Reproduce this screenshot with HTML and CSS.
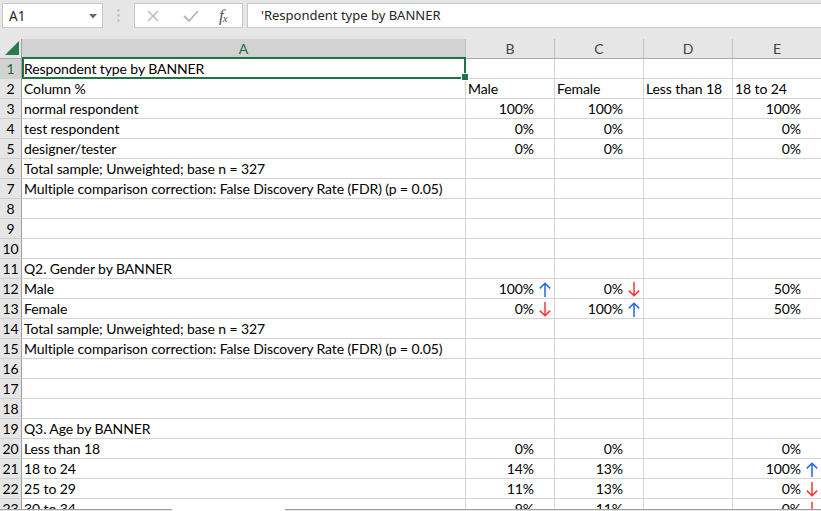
FILE: index.html
```html
<!DOCTYPE html>
<html>
<head>
<meta charset="utf-8">
<link rel="stylesheet" href="styles.css">
</head>
<body>
<div class="app">
  <div class="toolbar">
    <div class="namebox">
      <span class="ref">A1</span>
      <svg class="dd" width="8" height="5" viewBox="0 0 8 5"><path d="M0 0 H8 L4 4.5 Z" fill="#6a6a6a"/></svg>
    </div>
    <div class="dots">
      <svg width="3" height="13" viewBox="0 0 3 13"><rect x="0.5" y="0.5" width="2" height="2" fill="#b5b5b5"/><rect x="0.5" y="5.5" width="2" height="2" fill="#b5b5b5"/><rect x="0.5" y="10.5" width="2" height="2" fill="#b5b5b5"/></svg>
    </div>
    <div class="fxbox">
      <svg class="ico-x" width="12" height="12" viewBox="0 0 12 12"><path d="M1 1 L11 11 M11 1 L1 11" stroke="#b4b4b4" stroke-width="1.3" fill="none"/></svg>
      <svg class="ico-ok" width="16" height="12" viewBox="0 0 16 12"><path d="M1 6 L6 11 L15 1" stroke="#b4b4b4" stroke-width="1.8" fill="none"/></svg>
      <span class="fx"><i>f</i><sub>x</sub></span>
    </div>
    <div class="formula">'Respondent type by BANNER</div>
  </div>

  <div class="sheet">
    <div class="row hdr">
      <div class="corner"><svg width="14" height="14" viewBox="0 0 14 14"><path d="M14 0 V14 H0 Z" fill="#2b7a4c"/></svg></div>
      <div class="ch sel">A</div>
      <div class="ch">B</div>
      <div class="ch">C</div>
      <div class="ch">D</div>
      <div class="ch">E</div>
    </div>

    <div class="row"><div class="rh sel">1</div><div class="c">Respondent type by BANNER</div><div class="c"></div><div class="c"></div><div class="c"></div><div class="c"></div></div>
    <div class="row"><div class="rh">2</div><div class="c">Column %</div><div class="c">Male</div><div class="c">Female</div><div class="c">Less than 18</div><div class="c">18 to 24</div></div>
    <div class="row"><div class="rh">3</div><div class="c">normal respondent</div><div class="c num"><span>100%</span><span class="arr"></span></div><div class="c num"><span>100%</span><span class="arr"></span></div><div class="c"></div><div class="c num"><span>100%</span><span class="arr"></span></div></div>
    <div class="row"><div class="rh">4</div><div class="c">test respondent</div><div class="c num"><span>0%</span><span class="arr"></span></div><div class="c num"><span>0%</span><span class="arr"></span></div><div class="c"></div><div class="c num"><span>0%</span><span class="arr"></span></div></div>
    <div class="row"><div class="rh">5</div><div class="c">designer/tester</div><div class="c num"><span>0%</span><span class="arr"></span></div><div class="c num"><span>0%</span><span class="arr"></span></div><div class="c"></div><div class="c num"><span>0%</span><span class="arr"></span></div></div>
    <div class="row"><div class="rh">6</div><div class="c">Total sample; Unweighted; base n = 327</div><div class="c"></div><div class="c"></div><div class="c"></div><div class="c"></div></div>
    <div class="row"><div class="rh">7</div><div class="c">Multiple comparison correction: False Discovery Rate (FDR) (p = 0.05)</div><div class="c"></div><div class="c"></div><div class="c"></div><div class="c"></div></div>
    <div class="row"><div class="rh">8</div><div class="c"></div><div class="c"></div><div class="c"></div><div class="c"></div><div class="c"></div></div>
    <div class="row"><div class="rh">9</div><div class="c"></div><div class="c"></div><div class="c"></div><div class="c"></div><div class="c"></div></div>
    <div class="row"><div class="rh">10</div><div class="c"></div><div class="c"></div><div class="c"></div><div class="c"></div><div class="c"></div></div>
    <div class="row"><div class="rh">11</div><div class="c">Q2. Gender by BANNER</div><div class="c"></div><div class="c"></div><div class="c"></div><div class="c"></div></div>
    <div class="row"><div class="rh">12</div><div class="c">Male</div>
      <div class="c num up"><span>100%</span><span class="arr"><svg width="12" height="15" viewBox="0 0 12 15"><path d="M6 1.2 V15 M0.8 6.4 L6 1.2 L11.2 6.4" stroke="currentColor" stroke-width="1.5" fill="none"/></svg></span></div>
      <div class="c num down"><span>0%</span><span class="arr"><svg width="12" height="15" viewBox="0 0 12 15"><path d="M6 0 V13.8 M0.8 8.6 L6 13.8 L11.2 8.6" stroke="currentColor" stroke-width="1.5" fill="none"/></svg></span></div>
      <div class="c"></div><div class="c num"><span>50%</span><span class="arr"></span></div></div>
    <div class="row"><div class="rh">13</div><div class="c">Female</div>
      <div class="c num down"><span>0%</span><span class="arr"><svg width="12" height="15" viewBox="0 0 12 15"><path d="M6 0 V13.8 M0.8 8.6 L6 13.8 L11.2 8.6" stroke="currentColor" stroke-width="1.5" fill="none"/></svg></span></div>
      <div class="c num up"><span>100%</span><span class="arr"><svg width="12" height="15" viewBox="0 0 12 15"><path d="M6 1.2 V15 M0.8 6.4 L6 1.2 L11.2 6.4" stroke="currentColor" stroke-width="1.5" fill="none"/></svg></span></div>
      <div class="c"></div><div class="c num"><span>50%</span><span class="arr"></span></div></div>
    <div class="row"><div class="rh">14</div><div class="c">Total sample; Unweighted; base n = 327</div><div class="c"></div><div class="c"></div><div class="c"></div><div class="c"></div></div>
    <div class="row"><div class="rh">15</div><div class="c">Multiple comparison correction: False Discovery Rate (FDR) (p = 0.05)</div><div class="c"></div><div class="c"></div><div class="c"></div><div class="c"></div></div>
    <div class="row"><div class="rh">16</div><div class="c"></div><div class="c"></div><div class="c"></div><div class="c"></div><div class="c"></div></div>
    <div class="row"><div class="rh">17</div><div class="c"></div><div class="c"></div><div class="c"></div><div class="c"></div><div class="c"></div></div>
    <div class="row"><div class="rh">18</div><div class="c"></div><div class="c"></div><div class="c"></div><div class="c"></div><div class="c"></div></div>
    <div class="row"><div class="rh">19</div><div class="c">Q3. Age by BANNER</div><div class="c"></div><div class="c"></div><div class="c"></div><div class="c"></div></div>
    <div class="row"><div class="rh">20</div><div class="c">Less than 18</div><div class="c num"><span>0%</span><span class="arr"></span></div><div class="c num"><span>0%</span><span class="arr"></span></div><div class="c"></div><div class="c num"><span>0%</span><span class="arr"></span></div></div>
    <div class="row"><div class="rh">21</div><div class="c">18 to 24</div><div class="c num"><span>14%</span><span class="arr"></span></div><div class="c num"><span>13%</span><span class="arr"></span></div><div class="c"></div>
      <div class="c num up"><span>100%</span><span class="arr"><svg width="12" height="15" viewBox="0 0 12 15"><path d="M6 1.2 V15 M0.8 6.4 L6 1.2 L11.2 6.4" stroke="currentColor" stroke-width="1.5" fill="none"/></svg></span></div></div>
    <div class="row"><div class="rh">22</div><div class="c">25 to 29</div><div class="c num"><span>11%</span><span class="arr"></span></div><div class="c num"><span>13%</span><span class="arr"></span></div><div class="c"></div>
      <div class="c num down"><span>0%</span><span class="arr"><svg width="12" height="15" viewBox="0 0 12 15"><path d="M6 0 V13.8 M0.8 8.6 L6 13.8 L11.2 8.6" stroke="currentColor" stroke-width="1.5" fill="none"/></svg></span></div></div>
    <div class="row"><div class="rh">23</div><div class="c">30 to 34</div><div class="c num"><span>9%</span><span class="arr"></span></div><div class="c num"><span>11%</span><span class="arr"></span></div><div class="c"></div>
      <div class="c num down"><span>0%</span><span class="arr"><svg width="12" height="15" viewBox="0 0 12 15"><path d="M6 0 V13.8 M0.8 8.6 L6 13.8 L11.2 8.6" stroke="currentColor" stroke-width="1.5" fill="none"/></svg></span></div></div>

    <div class="selection"><div class="handle"></div></div>
  </div>

  <div class="bottombar">
    <div class="bb-left"></div>
    <div class="bb-gap"></div>
    <div class="bb-right"></div>
  </div>
</div>
</body>
</html>
```

FILE: styles.css
```css
html, body {
  margin: 0;
  padding: 0;
  background: #ffffff;
}
.app {
  width: 821px;
  height: 511px;
  overflow: hidden;
  display: flex;
  flex-direction: column;
}

/* ---------- formula bar ---------- */
.toolbar {
  height: 39px;
  flex: none;
  background: #e6e6e6;
  display: flex;
  align-items: flex-start;
  padding: 3px 0 0 2px;
  box-sizing: border-box;
}
.namebox {
  width: 101px;
  height: 25px;
  box-sizing: border-box;
  background: #fff;
  border: 1px solid #c6c6c6;
  display: flex;
  align-items: center;
  justify-content: space-between;
  padding: 0 5px 0 6px;
  font-family: "Noto Sans", "Open Sans", sans-serif;
  font-size: 13.5px;
  color: #262626;
}
.namebox .dd { margin-top: 1px; }
.dots {
  width: 31px;
  height: 25px;
  display: flex;
  align-items: center;
  justify-content: center;
}
.fxbox {
  width: 109px;
  height: 25px;
  box-sizing: border-box;
  background: #fff;
  border: 1px solid #c6c6c6;
  display: flex;
  align-items: center;
  padding-left: 12px;
}
.ico-x { margin-right: 24px; }
.ico-ok { margin-right: 20px; }
.fx {
  font-family: "Liberation Serif", serif;
  color: #555;
  font-size: 17px;
  line-height: 1;
}
.fx i { font-style: italic; }
.fx sub {
  font-size: 11px;
  font-style: italic;
  vertical-align: -1px;
  margin-left: -1px;
}
.formula {
  flex: 1;
  margin-left: 4px;
  height: 25px;
  box-sizing: border-box;
  background: #fff;
  border: 1px solid #c6c6c6;
  border-right: none;
  padding-left: 13px;
  font-family: "Noto Sans", "Open Sans", sans-serif;
  font-size: 13px;
  line-height: 22px;
  color: #262626;
  white-space: nowrap;
}

/* ---------- sheet ---------- */
.sheet {
  position: relative;
  height: 470px;
  flex: none;
  overflow: hidden;
}
.row {
  display: grid;
  grid-template-columns: 22px 444px 89px 89px 89px 89px;
  height: 20px;
  width: 822px;
}
.row > div {
  box-sizing: border-box;
  border-right: 1px solid #d4d4d4;
  border-bottom: 1px solid #d4d4d4;
  height: 20px;
  padding-top: 1px;
  white-space: nowrap;
  font-family: "Lato", "Liberation Sans", sans-serif;
  font-size: 14px;
  letter-spacing: -0.1px;
  line-height: 18px;
  color: #000;
}
.hdr > div {
  background: #e6e6e6;
  border-right: 1px solid #c0c0c0;
  border-bottom: 1px solid #ababab;
  text-align: center;
  color: #444;
}
.hdr .corner {
  display: flex;
  align-items: flex-end;
  justify-content: flex-end;
  padding: 0 2px 3px 0;
  border-right: 1px solid #9e9e9e;
}
.hdr .ch.sel {
  background: #d2d2d2;
  color: #1e6b3f;
}
.rh {
  background: #e6e6e6;
  text-align: center;
  color: #444;
}
.row > .rh {
  border-right: 1px solid #9e9e9e;
  border-bottom: 1px solid #d0d0d0;
}
.row > .rh.sel {
  background: #d2d2d2;
  color: #1e6b3f;
}
.c {
  padding-left: 2px;
  padding-right: 2px;
  overflow: visible;
}
.num {
  display: flex;
  justify-content: flex-end;
  padding-left: 0;
  padding-right: 3px;
}
.arr {
  width: 17px;
  flex: none;
  display: flex;
  align-items: center;
  justify-content: flex-end;
}
.up { color: #0000ff; }
.up .arr { color: #2266ff; }
.down { color: #ff0000; }
.down .arr { color: #ff3333; }

.selection {
  position: absolute;
  left: 22px;
  top: 18px;
  width: 444px;
  height: 22px;
  box-sizing: border-box;
  border: 2px solid #217346;
}
.handle {
  position: absolute;
  right: -4px;
  bottom: -3px;
  width: 6px;
  height: 6px;
  background: #217346;
  box-shadow: 0 0 0 1px #fff;
}

/* ---------- bottom edge ---------- */
.bottombar {
  height: 2px;
  flex: none;
  display: flex;
}
.bb-left {
  width: 172px;
  border-top: 1px solid #a0a0a0;
  background: #e6e6e6;
}
.bb-gap {
  width: 113px;
  background: #ffffff;
}
.bb-right {
  flex: 1;
  border-top: 1px solid #a0a0a0;
  background: #e6e6e6;
}
```
